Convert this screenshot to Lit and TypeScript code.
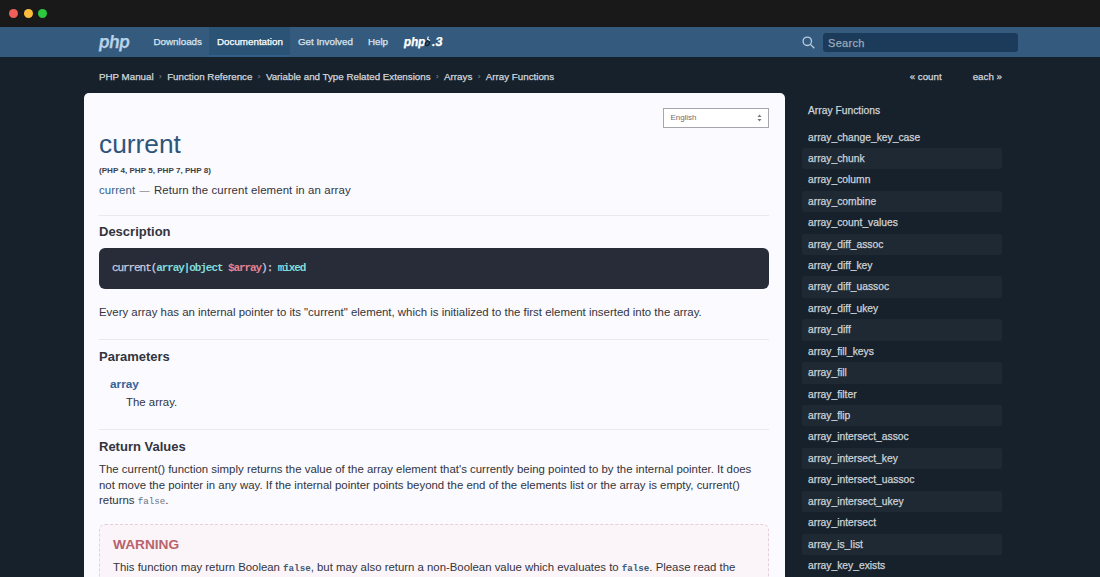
import { LitElement, html, css } from "lit";
import { customElement } from "lit/decorators.js";

const functions = [
  "array_change_key_case", "array_chunk", "array_column", "array_combine",
  "array_count_values", "array_diff_assoc", "array_diff_key", "array_diff_uassoc",
  "array_diff_ukey", "array_diff", "array_fill_keys", "array_fill", "array_filter",
  "array_flip", "array_intersect_assoc", "array_intersect_key",
  "array_intersect_uassoc", "array_intersect_ukey", "array_intersect",
  "array_is_list", "array_key_exists",
];
const crumbs = [
  "PHP Manual", "Function Reference", "Variable and Type Related Extensions",
  "Arrays", "Array Functions",
];

@customElement("site-header")
class SiteHeader extends LitElement {
  static styles = css`
    :host { display: block; }
    .dots { height: 27px; background: #191919; display: flex; align-items: center; gap: 5.5px; padding-left: 9px; box-sizing: border-box; }
    .dot { width: 9px; height: 9px; border-radius: 50%; }
    .red { background: #f25f58; } .yellow { background: #fbbe3c; } .green { background: #2bc840; }
    .nav { height: 30px; background: #345b7e; display: flex; padding-left: 99px; box-sizing: border-box; font-size: 9.8px; color: #dbe5f0; line-height: 30px; -webkit-text-stroke: 0.25px currentColor; }
    .logo { width: 47px; font: italic 600 17px/30px Inter, sans-serif; color: #b9d3ea; letter-spacing: -0.4px; }
    .link { padding: 0 7.5px; white-space: nowrap; }
    .on { color: #fff; background: #2b5375; border-bottom: 2px solid #315f88; box-sizing: border-box; }
    .release { font: italic 700 11.3px/30px Inter, sans-serif; color: #fff; padding-left: 8.5px; display: flex; width: 48px; }
    .eight { width: 7.5px; height: 14px; margin: 7px 0 0 -1px; flex: none; }
    .lens { width: 13px; height: 13px; margin: 9px 8px 0 auto; }
    .search { width: 195px; height: 19px; margin: 6px 82px 0 0; border-radius: 3px; background: #1c3b5b; color: #9caab8; font-size: 11px; line-height: 20px; padding-left: 5px; box-sizing: border-box; letter-spacing: 0.3px; }
  `;
  render() {
    return html`
      <div class="dots"><i class="dot red"></i><i class="dot yellow"></i><i class="dot green"></i></div>
      <nav class="nav">
        <span class="logo">php</span>
        <span class="link">Downloads</span><span class="link on">Documentation</span>
        <span class="link">Get Involved</span><span class="link">Help</span>
        <span class="release">php<svg class="eight" viewBox="0 0 7 14"><path d="M3.4 6.8 1.2 9.2Q.8 11.6 2.8 11.6 5.6 10.8 5.2 7.6L3.4 6.2 5.2 4.6" fill="none" stroke="#10263a" stroke-width="1.5"/><path d="M4 2.6 3.4 5.2 5.8 6.6" fill="none" stroke="#fff" stroke-width="1.2"/></svg>.3</span>
        <svg class="lens" viewBox="0 0 13 13" fill="none" stroke="#b9cfe1" stroke-width="1.3"><circle cx="5.3" cy="5.3" r="4.2"/><path d="m8.4 8.4 3.9 3.9"/></svg>
        <span class="search">Search</span>
      </nav>`;
  }
}

@customElement("manual-sidebar")
class ManualSidebar extends LitElement {
  static styles = css`
    :host { display: block; width: 200px; color: #cdd3d9; font-size: 10.3px; -webkit-text-stroke: 0.25px currentColor; }
    .title { padding-left: 6px; line-height: 20px; margin: 8px 0 5.5px; }
    .item { height: 21.43px; line-height: 21.43px; padding-left: 6px; border-radius: 2px; }
    .item:nth-child(odd) { background: #1f2933; }
  `;
  render() {
    return html`<div class="title">Array Functions</div>
      ${functions.map((f) => html`<div class="item">${f}</div>`)}`;
  }
}

@customElement("manual-page")
class ManualPage extends LitElement {
  static styles = css`
    :host { display: block; box-sizing: border-box; width: 701px; height: 500px; overflow: hidden; padding: 15px 16px 0 15.5px; background: #fafaff; border-radius: 5px 5px 0 0; color: #33343c; font-size: 11.43px; line-height: 16px; }
    .lang { width: 106px; height: 20px; border: 1px solid #a5a6ae; box-sizing: border-box; margin-left: auto; display: flex; align-items: center; justify-content: space-between; padding: 0 6px 0 7px; font-size: 7.9px; color: #6c6d75; background: #fff; }
    .arrows { width: 5px; height: 8px; }
    h1 { margin: 0; font-size: 26.3px; line-height: 32px; font-weight: 400; color: #2e557b; }
    .versions { font-size: 8.1px; line-height: 12px; font-weight: 700; margin-top: 5px; color: #3d3e46; }
    .purpose { margin-top: 5px; font-size: 11.43px; letter-spacing: 0.1px; }
    .name { color: #365f82; } .dash { color: #8c8d93; font-size: 10px; margin: 0 1px; }
    .section { border-top: 1px solid #e9e9ef; margin-top: 19px; padding-top: 8px; }
    .first { margin-top: 16px; padding-top: 7px; }
    .last { margin-top: 0; }
    h2 { margin: 0; font-size: 13px; line-height: 17px; font-weight: 700; }
    .code { font-family: "Liberation Mono", monospace; }
    .synopsis { height: 41px; margin-top: 8px; border-radius: 6px; background: #282b38; color: #c8cee0; line-height: 40px; padding-left: 13px; font-size: 11px; letter-spacing: -1.08px; font-weight: 400; -webkit-text-stroke: 0.25px currentColor; white-space: pre; }
    .type, .var { font-weight: 700; -webkit-text-stroke: 0; }
    .type { color: #7fdcda; } .var { color: #e68290; }
    .text { margin: 15px 0 0; }
    .param { margin: 11px 0 0 11px; color: #35639a; font-weight: 700; font-size: 11.8px; }
    .detail { margin: 2px 0 19px 27px; }
    .returns { margin-top: 7px; line-height: 15.6px; }
    .value { font-size: 9.2px; color: #68717f; }
    .strong { color: #3d5c78; font-weight: 700; }
    .warning { margin-top: 14px; border: 1px dashed #e5cfd9; border-radius: 6px; background: #fbf5fa; padding: 11px 13px; height: 70px; }
    .caution { color: #b8636b; font-size: 13.7px; font-weight: 700; line-height: 18px; }
    .note { margin-top: 5px; white-space: nowrap; font-size: 11.39px; }
  `;
  render() {
    return html`
      <div class="lang"><span>English</span><svg class="arrows" viewBox="0 0 5 8" fill="#74757c"><path d="M.5 3 2.5.5 4.5 3zM.5 5l2 2.5 2-2.5z"/></svg></div>
      <h1>current</h1>
      <div class="versions">(PHP 4, PHP 5, PHP 7, PHP 8)</div>
      <div class="purpose"><span class="name">current</span> <span class="dash">—</span> Return the current element in an array</div>
      <div class="section first"><h2>Description</h2>
        <div class="synopsis code">current(<span class="type">array|object</span> <span class="var">$array</span>): <span class="type">mixed</span></div>
        <div class="text">Every array has an internal pointer to its "current" element, which is initialized to the first element inserted into the array.</div>
      </div>
      <div class="section"><h2>Parameters</h2>
        <div class="param">array</div><div class="detail">The array.</div>
      </div>
      <div class="section last"><h2>Return Values</h2>
        <div class="returns">The current() function simply returns the value of the array element that's currently being pointed to by the internal pointer. It does<br>not move the pointer in any way. If the internal pointer points beyond the end of the elements list or the array is empty, current()<br>returns <span class="code value">false</span>.</div>
      </div>
      <div class="warning"><div class="caution">WARNING</div>
        <div class="note">This function may return Boolean <span class="code value strong">false</span>, but may also return a non-Boolean value which evaluates to <span class="code value strong">false</span>. Please read the</div>
      </div>`;
  }
}

@customElement("app-root")
class AppRoot extends LitElement {
  static styles = css`
    :host { display: block; width: 1100px; height: 577px; overflow: hidden; background: #17212b; font-family: "Liberation Sans", Arial, sans-serif; }
    .crumbs { height: 36px; display: flex; align-items: center; padding: 3px 98px 0 99px; box-sizing: border-box; font-size: 9.77px; color: #d2d7dd; -webkit-text-stroke: 0.25px currentColor; }
    .sep { width: 13.5px; text-align: center; color: #66717c; font-size: 8px; }
    .prev { margin-left: auto; margin-right: 31px; }
    .main { display: flex; padding-left: 83.5px; gap: 17.5px; }
  `;
  render() {
    return html`<site-header></site-header>
      <div class="crumbs">
        ${crumbs.map((c, i) => html`${i ? html`<span class="sep">›</span>` : ""}<span>${c}</span>`)}
        <span class="prev">« count</span><span>each »</span>
      </div>
      <div class="main"><manual-page></manual-page><manual-sidebar></manual-sidebar></div>`;
  }
}
